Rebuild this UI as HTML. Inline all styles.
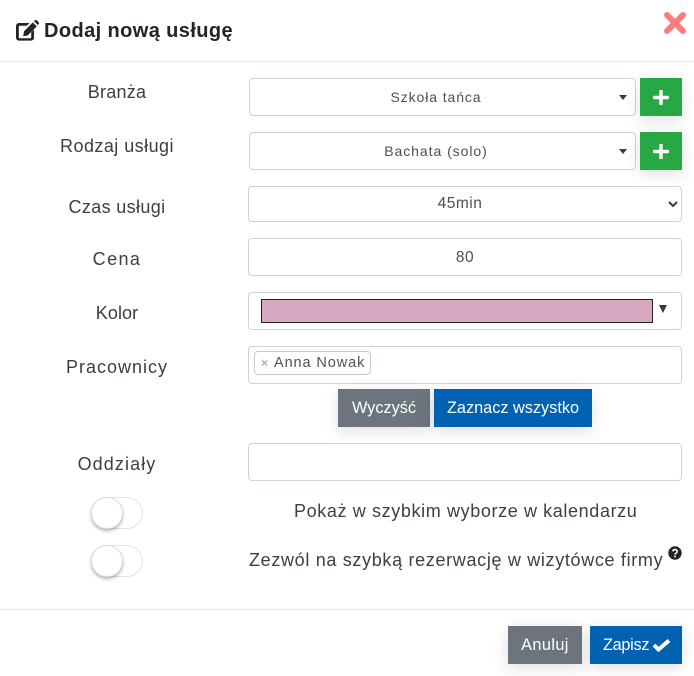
<!DOCTYPE html>
<html><head><meta charset="utf-8">
<style>
html,body{margin:0;padding:0;background:#fff}
body{width:694px;height:676px;position:relative;overflow:hidden;font-family:"Liberation Sans",sans-serif;color:#495057}
.a{position:absolute;box-sizing:border-box}
.t{position:absolute;white-space:nowrap;line-height:20px;height:20px}
.c{text-align:center}
.l{font-size:18px;color:#3b4046;text-align:center;left:11px;width:212px}
.box{position:absolute;box-sizing:border-box;border:1px solid #ced4da;border-radius:4px;background:#fff}
.btn{position:absolute;box-sizing:border-box;color:#fff;text-align:center;font-size:16.3px;box-shadow:0 4px 16px rgba(0,0,0,.13)}
.g{background:#28a745;width:42px;height:38px;left:640px}
.line{position:absolute;left:0;width:694px;height:1px;background:#e3e5e8}
.tog{position:absolute;left:91px;width:52px;height:32px;border:1px solid #e2e2e2;border-radius:16px;box-sizing:border-box;background:#fff}
.tog i{position:absolute;left:-1px;top:-1px;width:32px;height:32px;border-radius:50%;background:#fff;border:1px solid #ddd;box-sizing:border-box;box-shadow:0 2px 3px rgba(0,0,0,.3)}
.tri{position:absolute;width:0;height:0;border-left:4px solid transparent;border-right:4px solid transparent;border-top:5px solid #343a40}
</style></head><body>
<div class="a" style="left:0;top:0;width:694px;height:676px;background:#fff"></div>
<svg class="a" style="left:16px;top:20px" width="23" height="21" viewBox="0 0 23 21"><path fill="#212529" d="M3 3h10.5l-2.6 2.8H3.6a.8.8 0 0 0-.8.8v10.8a.8.8 0 0 0 .8.8h10.8a.8.8 0 0 0 .8-.8v-5l2.8-2.8v8a3 3 0 0 1-3 3H3a3 3 0 0 1-3-3V6a3 3 0 0 1 3-3z"/><path fill="#212529" d="M16.8 2.4l4 4-9 9-4.6.8.8-4.8zM18 1.2l.8-.8a1.5 1.5 0 0 1 2.1 0l1.7 1.7a1.5 1.5 0 0 1 0 2.1l-.8.8z"/></svg>
<div class="t" style="left:44px;top:21px;font-size:20px;font-weight:bold;color:#212529;letter-spacing:.4px">Dodaj nową usługę</div>
<svg class="a" style="left:663px;top:11px" width="24" height="24" viewBox="0 0 24 24"><path d="M4 4L20 20M20 4L4 20" stroke="#ff7b7b" stroke-width="6" stroke-linecap="round"/></svg>
<div class="line" style="top:61px"></div>

<div class="t l" style="top:82px;letter-spacing:.25px">Branża</div>
<div class="box" style="left:249px;top:78px;width:387px;height:38px"></div>
<div class="t c" style="left:249px;width:374px;top:87px;font-size:14px;letter-spacing:.9px;color:#495057">Szkoła tańca</div>
<div class="tri" style="left:619px;top:95px"></div>
<div class="btn g" style="top:78px"></div>
<svg class="a" style="left:653px;top:90px" width="16" height="15" viewBox="0 0 16 15"><path d="M1.5 7.5h13M8 1v13" stroke="#fff" stroke-width="3.4" stroke-linecap="round"/></svg>

<div class="t l" style="top:136px;letter-spacing:.45px">Rodzaj usługi</div>
<div class="box" style="left:249px;top:132px;width:387px;height:38px"></div>
<div class="t c" style="left:249px;width:374px;top:141px;font-size:14px;letter-spacing:.95px;color:#495057">Bachata (solo)</div>
<div class="tri" style="left:619px;top:149px"></div>
<div class="btn g" style="top:132px"></div>
<svg class="a" style="left:653px;top:144px" width="16" height="15" viewBox="0 0 16 15"><path d="M1.5 7.5h13M8 1v13" stroke="#fff" stroke-width="3.4" stroke-linecap="round"/></svg>

<div class="t l" style="top:197px;letter-spacing:.35px">Czas usługi</div>
<div class="box" style="left:248px;top:186px;width:434px;height:36px"></div>
<div class="t c" style="left:249px;width:422px;top:194px;font-size:15.5px;letter-spacing:.5px">45min</div>
<svg class="a" style="left:668px;top:201px" width="10" height="7" viewBox="0 0 10 7"><path d="M1 1l4 4 4-4" fill="none" stroke="#343a40" stroke-width="2"/></svg>

<div class="t l" style="top:249px;letter-spacing:1.4px">Cena</div>
<div class="box" style="left:248px;top:238px;width:434px;height:38px"></div>
<div class="t c" style="left:248px;width:434px;top:248px;font-size:15.5px;letter-spacing:.5px">80</div>

<div class="t l" style="top:303px;letter-spacing:.1px">Kolor</div>
<div class="box" style="left:248px;top:292px;width:434px;height:38px"></div>
<div class="a" style="left:261px;top:299px;width:392px;height:24px;background:#d7a7bf;border:1px solid #222"></div>
<div class="tri" style="left:659px;top:305px;border-left-width:4.5px;border-right-width:4.5px;border-top-width:8px"></div>

<div class="t l" style="top:357px;letter-spacing:1px">Pracownicy</div>
<div class="box" style="left:248px;top:346px;width:434px;height:38px"></div>
<div class="box" style="left:254px;top:351px;width:117px;height:24px;border-color:#c3c9d6"></div>
<div class="t" style="left:261px;top:353px;font-size:12px;color:#a6adb8;font-weight:bold">×</div>
<div class="t" style="left:274px;top:353px;font-size:14.5px;letter-spacing:.9px;color:#4c5257">Anna Nowak</div>

<div class="btn" style="left:338px;top:389px;width:92px;height:38px;line-height:38px;background:#6c757d">Wyczyść</div>
<div class="btn" style="left:434px;top:389px;width:158px;height:38px;line-height:38px;background:#0062b0">Zaznacz wszystko</div>

<div class="t l" style="top:454px;letter-spacing:1.1px">Oddziały</div>
<div class="box" style="left:248px;top:443px;width:434px;height:38px"></div>

<div class="tog" style="top:497px"><i></i></div>
<div class="t" style="left:294px;top:501px;font-size:18px;letter-spacing:.62px;color:#3b4046">Pokaż w szybkim wyborze w kalendarzu</div>
<div class="tog" style="top:545px"><i></i></div>
<div class="t" style="left:249px;top:550px;font-size:18px;letter-spacing:.67px;color:#3b4046">Zezwól na szybką rezerwację w wizytówce firmy</div>
<svg class="a" style="left:668px;top:546px" width="14" height="14" viewBox="0 0 14 14"><circle cx="7" cy="7" r="6.7" fill="#212529"/><path d="M4.8 5.4c.2-1.2 1.1-1.8 2.2-1.8 1.2 0 2.2.8 2.2 1.9 0 1.7-2.1 1.6-2.1 3.1" fill="none" stroke="#fff" stroke-width="1.6"/><rect x="6.2" y="9.6" width="1.7" height="1.7" fill="#fff"/></svg>

<div class="line" style="top:609px"></div>
<div class="btn" style="left:508px;top:626px;width:74px;height:38px;line-height:38px;background:#6c757d;letter-spacing:.4px">Anuluj</div>
<div class="btn" style="left:590px;top:626px;width:92px;height:38px;line-height:38px;background:#0062b0;text-align:left;padding-left:13px;letter-spacing:-.3px">Zapisz</div>
<svg class="a" style="left:652px;top:638px" width="19" height="14" viewBox="0 0 19 14"><path d="M2 7l4.5 4.5L17 2.5" fill="none" stroke="#fff" stroke-width="4"/></svg>
</body></html>
